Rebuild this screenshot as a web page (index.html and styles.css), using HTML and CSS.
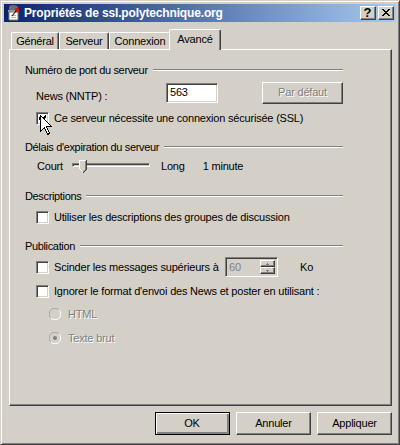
FILE: index.html
```html
<!DOCTYPE html>
<html>
<head>
<meta charset="utf-8">
<link rel="stylesheet" href="styles.css">
</head>
<body>
<div class="window">
  <div class="titlebar">
    <svg class="ticon" width="16" height="16" viewBox="0 0 16 16">
      <path d="M3 2 Q3 0 7 0 Q11 0 12 2 L12 6 L3 6 Z" fill="#6b6b6b"/>
      <path d="M2 5h11v2h-11z" fill="#9a9a9a"/>
      <path d="M3 7h9v8h-9z" fill="#fff" stroke="#808080" stroke-width="1"/>
      <path d="M5 10h5v1h-5zM5 12h5v1h-5z" fill="#d8c020"/>
      <circle cx="11" cy="5" r="2.2" fill="#e01010"/>
      <path d="M6 11 L10 6" stroke="#202020" stroke-width="1.2"/>
    </svg>
    <span class="title">Propriétés de ssl.polytechnique.org</span>
    <div class="tbtns">
      <div class="tbtn q">?</div>
      <div class="tbtn">
        <svg width="8" height="7" viewBox="0 0 8 7" shape-rendering="crispEdges"><path d="M0 0h2v1h-2zM6 0h2v1h-2zM1 1h2v1h-2zM5 1h2v1h-2zM2 2h4v1h-4zM3 3h2v1h-2zM2 4h4v1h-4zM1 5h2v1h-2zM5 5h2v1h-2zM0 6h2v1h-2zM6 6h2v1h-2z" fill="#000"/></svg>
      </div>
    </div>
  </div>

  <div class="tabs">
    <div class="tab t1">Général</div>
    <div class="tab t2">Serveur</div>
    <div class="tab t3">Connexion</div>
    <div class="tab sel">Avancé</div>
  </div>

  <div class="panel">
    <div class="group g1"><span>Numéro de port du serveur</span><i class="rule"></i></div>
    <div class="row news">
      <span class="lbl">News (NNTP) :</span>
      <div class="field">563</div>
      <div class="btn disabled pardefaut"><span>Par défaut</span></div>
    </div>
    <div class="row cbrow ssl">
      <div class="cb"><svg width="7" height="7" viewBox="0 0 7 7" shape-rendering="crispEdges"><path d="M6 0h1v1h-1zM5 1h2v1h-2zM0 2h1v1h-1zM4 2h3v1h-3zM0 3h2v1h-2zM3 3h3v1h-3zM0 4h5v1h-5zM1 5h3v1h-3zM2 6h1v1h-1z" fill="#000"/></svg></div>
      <span class="cblbl">Ce serveur nécessite une connexion sécurisée (SSL)</span>
    </div>

    <div class="group g2"><span>Délais d'expiration du serveur</span><i class="rule"></i></div>
    <div class="row slider">
      <span class="court">Court</span>
      <div class="track">
        <svg class="thumb" width="8" height="13" viewBox="0 0 8 13" shape-rendering="crispEdges">
          <path d="M0 0h8v9l-4 4l-4-4z" fill="#D4D0C8"/>
          <path d="M0 0h7v1h-6v8h-1z" fill="#fff"/>
          <path d="M1 9h1v1h1v1h1v1h-1v-1h-1v-1h-1z" fill="#fff"/>
          <path d="M7 0h1v9h-1zM7 9h1v1h-1v1h-1v1h-1v1h-1v-1h1v-1h1v-1h1z" fill="#404040"/>
          <path d="M6 1h1v8h-1zM6 9h1v1h-1v1h-1v1h-1v-1h1v-1h1z" fill="#808080"/>
        </svg>
      </div>
      <span class="long">Long</span>
      <span class="minute">1 minute</span>
    </div>

    <div class="group g3"><span>Descriptions</span><i class="rule"></i></div>
    <div class="row cbrow desc">
      <div class="cb"></div>
      <span class="cblbl">Utiliser les descriptions des groupes de discussion</span>
    </div>

    <div class="group g4"><span>Publication</span><i class="rule"></i></div>
    <div class="row cbrow scinder">
      <div class="cb"></div>
      <span class="cblbl sclbl">Scinder les messages supérieurs à</span>
      <div class="spin">
        <span class="spinval">60</span>
        <div class="spinbtns">
          <div class="sbtn"><svg width="3" height="2" viewBox="0 0 3 2" shape-rendering="crispEdges"><path d="M1 0h1v1h1v1h-3v-1h1z" fill="#808080"/></svg></div>
          <div class="sbtn"><svg width="3" height="2" viewBox="0 0 3 2" shape-rendering="crispEdges"><path d="M0 0h3v1h-1v1h-1v-1h-1z" fill="#808080"/></svg></div>
        </div>
      </div>
      <span class="ko">Ko</span>
    </div>
    <div class="row cbrow ignorer">
      <div class="cb"></div>
      <span class="cblbl">Ignorer le format d'envoi des News et poster en utilisant :</span>
    </div>
    <div class="row radrow html">
      <svg class="radio" width="12" height="12" viewBox="0 0 12 12">
        <circle cx="6" cy="6" r="5.5" fill="#D4D0C8"/>
        <path d="M1.9 10.1 A5.5 5.5 0 0 1 10.1 1.9" fill="none" stroke="#a8a6a0" stroke-width="1"/>
        <path d="M10.1 1.9 A5.5 5.5 0 0 1 1.9 10.1" fill="none" stroke="#fff" stroke-width="1"/>
      </svg>
      <span class="radlbl">HTML</span>
    </div>
    <div class="row radrow texte">
      <svg class="radio" width="12" height="12" viewBox="0 0 12 12">
        <circle cx="6" cy="6" r="5.5" fill="#D4D0C8"/>
        <path d="M1.9 10.1 A5.5 5.5 0 0 1 10.1 1.9" fill="none" stroke="#a8a6a0" stroke-width="1"/>
        <path d="M10.1 1.9 A5.5 5.5 0 0 1 1.9 10.1" fill="none" stroke="#fff" stroke-width="1"/>
        <circle cx="6" cy="6" r="2" fill="#808080"/>
      </svg>
      <span class="radlbl">Texte brut</span>
    </div>
  </div>

  <div class="buttons">
    <div class="btn default"><span>OK</span></div>
    <div class="btn"><span>Annuler</span></div>
    <div class="btn"><span>Appliquer</span></div>
  </div>

  <svg class="cursor" width="12" height="20" viewBox="0 0 12 20" shape-rendering="crispEdges">
    <path d="M0.5 0.5 L0.5 16.5 L4.5 12.5 L7.5 19.5 L9.5 18.5 L6.5 11.5 L11.5 11.5 Z" fill="#fff" stroke="#000" stroke-width="1" stroke-linejoin="miter"/>
  </svg>
</div>
</body>
</html>
```

FILE: styles.css
```css
* { box-sizing: border-box; }
html, body { margin: 0; padding: 0; background: #D4D0C8; }
body {
  font-family: "Liberation Sans", Arial, sans-serif;
  font-size: 11px;
  line-height: 13px;
  letter-spacing: -0.2px;
  color: #000;
}
.window {
  position: relative;
  width: 400px;
  height: 445px;
  background: #D4D0C8;
  border: 1px solid;
  border-color: #D4D0C8 #404040 #404040 #D4D0C8;
  box-shadow: inset 1px 1px #fff, inset -1px -1px #808080;
  padding: 3px;
  display: flex;
  flex-direction: column;
}
.titlebar {
  height: 18px;
  flex: none;
  display: flex;
  align-items: center;
  background: linear-gradient(to right, #0A246A, #A6CAF0);
  padding: 0 2px 0 2px;
}
.ticon { flex: none; margin-right: 2px; }
.title {
  color: #fff;
  font-weight: bold;
  font-size: 12px;
  letter-spacing: -0.15px;
  flex: 1;
  white-space: nowrap;
}
.tbtns { display: flex; gap: 2px; }
.tbtn {
  width: 16px;
  height: 14px;
  background: #D4D0C8;
  border: 1px solid;
  border-color: #fff #404040 #404040 #fff;
  box-shadow: inset -1px -1px #808080;
  display: flex;
  align-items: center;
  justify-content: center;
  padding: 0 1px 1px 0;
}
.tbtn.q {
  font-weight: bold;
  font-size: 13px;
  line-height: 12px;
  letter-spacing: 0;
}

.tabs {
  display: flex;
  align-items: flex-end;
  height: 21px;
  margin: 7px 0 -1px 7px;
  flex: none;
}
.tab {
  height: 18px;
  border-top: 1px solid #fff;
  border-left: 1px solid #fff;
  border-right: 1px solid #404040;
  border-top-left-radius: 2px;
  border-top-right-radius: 2px;
  box-shadow: inset -1px 0 #808080;
  text-align: center;
  padding-top: 2px;
  white-space: nowrap;
}
.t1 { width: 48px; }
.t2 { width: 50px; }
.t3 { width: 62px; }
.tab.sel {
  width: 52px;
  height: 21px;
  margin: 0 -2px 0 -2px;
  background: #D4D0C8;
  position: relative;
  z-index: 1;
  padding-top: 3px;
}

.panel {
  flex: none;
  height: 357px;
  margin: 0 4px 0 5px;
  border: 1px solid;
  border-color: #fff #404040 #404040 #fff;
  box-shadow: inset -1px -1px #808080;
  padding: 0 48px 0 15px;
  display: flex;
  flex-direction: column;
}
.group {
  display: flex;
  height: 13px;
  white-space: nowrap;
}
.group span { letter-spacing: -0.35px; }
.rule {
  flex: 1;
  height: 2px;
  margin: 5px 0 0 5px;
  border-top: 1px solid #808080;
  border-bottom: 1px solid #fff;
}
.g1 { margin-top: 14px; }
.g2 { margin-top: 16px; }
.g3 { margin-top: 17px; }
.g4 { margin-top: 16px; }

.row { display: flex; align-items: center; padding-left: 11px; white-space: nowrap; }
.news { height: 22px; margin-top: 5px; align-items: flex-start; }
.news .lbl { margin-top: 8px; width: 130px; }
.field {
  width: 52px;
  height: 20px;
  margin-top: 1px;
  background: #fff;
  border: 1px solid;
  border-color: #808080 #fff #fff #808080;
  box-shadow: inset 1px 1px #404040, inset -1px -1px #D4D0C8;
  padding: 2px 0 0 3px;
}
.pardefaut { margin-left: 44px; width: 81px; height: 22px; }

.btn {
  display: flex;
  align-items: center;
  justify-content: center;
  background: #D4D0C8;
  border: 1px solid;
  border-color: #fff #404040 #404040 #fff;
  box-shadow: inset -1px -1px #808080;
  padding-bottom: 1px;
}
.btn.disabled span {
  color: #808080;
  text-shadow: 1px 1px #fff;
}

.cbrow { height: 13px; }
.ssl { margin-top: 8px; }
.desc { margin-top: 8px; }
.cb {
  width: 13px;
  height: 13px;
  flex: none;
  background: #fff;
  border: 1px solid;
  border-color: #808080 #fff #fff #808080;
  box-shadow: inset 1px 1px #404040, inset -1px -1px #D4D0C8;
  padding: 2px 0 0 2px;
  display: flex;
}
.cb svg { display: block; }
.cblbl { margin-left: 5px; }
.sclbl { width: 171px; }

.slider { height: 14px; margin-top: 5px; align-items: flex-start; }
.court { width: 36px; margin-top: 1px; padding-left: 1px; }
.track {
  width: 78px;
  height: 4px;
  margin-top: 4px;
  border: 1px solid;
  border-color: #808080 #fff #fff #808080;
  box-shadow: inset 1px 1px #404040, inset -1px -1px #D4D0C8;
  display: flex;
}
.thumb { display: block; margin: -4px 0 0 6px; flex: none; }
.long { margin-left: 11px; margin-top: 1px; }
.minute { margin-left: 18px; margin-top: 1px; }

.scinder { height: 20px; margin-top: 4px; }
.spin {
  width: 53px;
  height: 20px;
  background: #D4D0C8;
  border: 1px solid;
  border-color: #808080 #fff #fff #808080;
  box-shadow: inset 1px 1px #404040, inset -1px -1px #D4D0C8;
  display: flex;
  padding: 2px 2px 2px 2px;
}
.spinval { flex: 1; color: #808080; padding-left: 1px; line-height: 15px; }
.spinbtns { width: 15px; display: flex; flex-direction: column; }
.sbtn {
  flex: 1;
  background: #D4D0C8;
  border: 1px solid;
  border-color: #fff #404040 #404040 #fff;
  box-shadow: inset -1px -1px #808080;
  display: flex;
  align-items: center;
  justify-content: center;
}
.sbtn svg { display: block; }
.ko { margin-left: 22px; }
.ignorer { margin-top: 8px; }

.radrow { height: 12px; padding-left: 24px; }
.html { margin-top: 10px; }
.texte { margin-top: 12px; }
.radio { flex: none; display: block; }
.radlbl { margin-left: 7px; color: #808080; text-shadow: 1px 1px #fff; }

.buttons {
  display: flex;
  justify-content: flex-end;
  gap: 6px;
  margin: 6px 4px 0 0;
}
.buttons .btn { width: 75px; height: 23px; }
.btn.default {
  border-color: #000;
  padding: 0 1px 1px 0;
  box-shadow: inset 1px 1px #fff, inset -2px -2px #808080, inset -1px -1px #404040;
}

.cursor { position: absolute; left: 39px; top: 114px; }
```
